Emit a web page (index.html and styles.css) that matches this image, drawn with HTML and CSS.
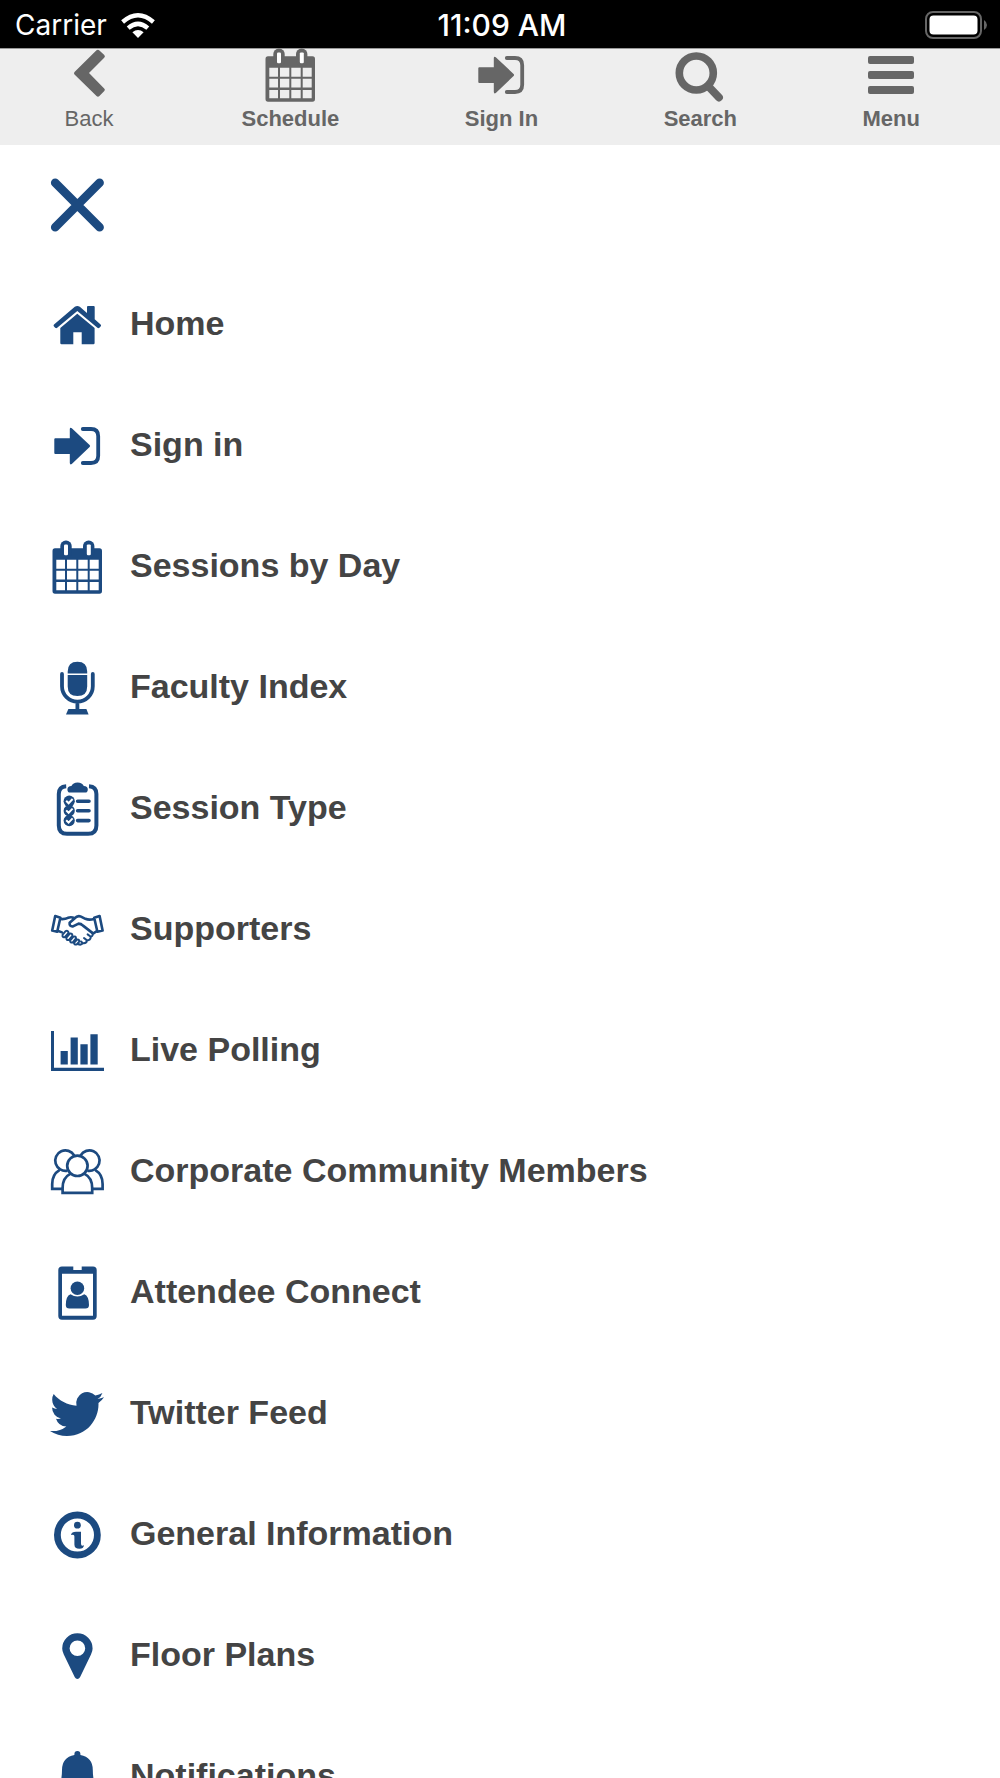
FILE: index.html
```
<!DOCTYPE html>
<html lang="en">
    <head>
        <title>Menu</title>
        <meta charset="utf-8">
        <meta name="viewport" content="width=device-width, initial-scale=1">
        <link rel="stylesheet" href="styles.css">
    </head>
    <body>
        <!-- icons used in both the nav bar and the menu -->
        <svg class="sprite" aria-hidden="true">
            <symbol id="icon-calendar" viewBox="0 0 54 54">
                <path fill-rule="evenodd" d="M5 8.3H49.5Q52 8.3 52 11V51Q52 53.7 49.5 53.7H5Q2.5 53.7 2.5 51V11Q2.5 8.3 5 8.3ZM6.3 19.7V28.7H15V19.7ZM17 19.7V28.7H26.3V19.7ZM28.3 19.7V28.7H37.7V19.7ZM39.7 19.7V28.7H48.7V19.7ZM6.3 30.7V39.5H15V30.7ZM17 30.7V39.5H26.3V30.7ZM28.3 30.7V39.5H37.7V30.7ZM39.7 30.7V39.5H48.7V30.7ZM6.3 42V50.2H15V42ZM17 42V50.2H26.3V42ZM28.3 42V50.2H37.7V42ZM39.7 42V50.2H48.7V42Z"/>
                <rect x="10.3" y="0.6" width="11.4" height="18" rx="5.5"/>
                <rect x="33" y="0.6" width="11.4" height="18" rx="5.5"/>
                <rect class="hole" x="14" y="4.4" width="4" height="10.8" rx="1.2"/>
                <rect class="hole" x="36.8" y="4.4" width="4" height="10.8" rx="1.2"/>
            </symbol>
            <symbol id="icon-sign-in" viewBox="0 0 54 54">
                <path d="M5.3 19.3H19.8V10Q20 7.8 21.8 9.2L39.6 26Q40.6 27 39.6 28L21.8 45Q20 46.2 19.8 44V35H5.3Q4.3 35 4.3 34V20.3Q4.3 19.3 5.3 19.3Z"/>
                <path class="line" stroke-width="3.8" stroke-linecap="round" d="M32.8 10H41Q48.2 10 48.2 17.2V36.8Q48.2 44 41 44H32.8"/>
            </symbol>
        </svg>

        <div class="status-bar">
            <div class="carrier">
                <span>Carrier</span>
                <svg class="wifi" viewBox="0 0 34 25">
                    <path d="M17 25L11.4 19.2Q17 14.6 22.6 19.2Z"/>
                    <path class="line" stroke-width="4.4" d="M7.2 15.2Q17 6.6 26.8 15.2M1.6 9Q17 -4.4 32.4 9"/>
                </svg>
            </div>
            <span class="time">11:09 AM</span>
            <svg class="battery" viewBox="0 0 64 28">
                <rect class="battery-case" x="1" y="1" width="55" height="26" rx="7"/>
                <rect x="4.5" y="4.5" width="48" height="19" rx="4"/>
                <path class="battery-tip" d="M59 9Q62 11 62 14Q62 17 59 19Z"/>
            </svg>
        </div>

        <nav class="nav-bar">
            <button type="button" class="nav-item back">
                <svg class="icon" viewBox="0 0 54 54"><path d="M12.5 24L34.5 2.3Q36 1 37.4 2.4L42.3 7Q43.6 8.4 42.2 9.8L27 25L42.2 40.4Q43.6 41.8 42.3 43L37.4 48Q36 49.4 34.5 48L12.5 26.4Q11.4 25.2 12.5 24Z"/></svg>
                <span>Back</span>
            </button>
            <a href="#schedule" class="nav-item">
                <svg class="icon"><use href="#icon-calendar"/></svg>
                <span>Schedule</span>
            </a>
            <a href="#sign-in" class="nav-item">
                <svg class="icon"><use href="#icon-sign-in"/></svg>
                <span>Sign In</span>
            </a>
            <a href="#search" class="nav-item">
                <svg class="icon" viewBox="0 0 54 54"><circle class="line" stroke-width="7.6" cx="23.3" cy="25" r="17"/><path class="line" stroke-width="7.8" stroke-linecap="round" d="M36.5 39.5L46 49.5"/></svg>
                <span>Search</span>
            </a>
            <button type="button" class="nav-item">
                <svg class="icon" viewBox="0 0 54 54"><rect x="4" y="8" width="46" height="8" rx="2"/><rect x="4" y="23" width="46" height="8" rx="2"/><rect x="4" y="38" width="46" height="8" rx="2"/></svg>
                <span>Menu</span>
            </button>
        </nav>

        <main class="menu">
            <button type="button" class="close" aria-label="Close menu">
                <svg class="icon" viewBox="0 0 54 54"><path class="line" stroke-width="8.6" stroke-linecap="round" d="M5.2 4.8L49.6 49.2M49.6 4.8L5.2 49.2"/></svg>
            </button>
            <ul class="menu-list">
                <li><a href="#home">
                    <svg class="icon" viewBox="0 0 54 54">
                        <path d="M4 26.6L24.8 8.8Q27.3 7 29.8 8.8L37 15V9Q37 8 38 8H43.7Q44.7 8 44.7 9V21.3L50.6 26.4Q51.6 27.4 50.6 28.4L49.4 29.8Q48.4 30.6 47.4 29.8L27.3 13L7.2 29.8Q6.2 30.6 5.2 29.8L4 28.6Q3 27.6 4 26.6Z"/>
                        <path d="M27.3 15.8L44.6 30V45Q44.6 46.2 43.4 46.2H31.7V34.3H23.3V46.2H11.5Q10.3 46.2 10.3 45V30Z"/>
                    </svg>
                    <span>Home</span>
                </a></li>
                <li><a href="#sign-in">
                    <svg class="icon"><use href="#icon-sign-in"/></svg>
                    <span>Sign in</span>
                </a></li>
                <li><a href="#sessions">
                    <svg class="icon"><use href="#icon-calendar"/></svg>
                    <span>Sessions by Day</span>
                </a></li>
                <li><a href="#faculty">
                    <svg class="icon" viewBox="0 0 54 54">
                        <path d="M17.7 12.4V10.5Q17.7 0.7 27.4 0.7Q37.2 0.7 37.2 10.5V12.4ZM17.7 14V25.4Q17.7 35 27.4 35Q37.2 35 37.2 25.4V14Z"/>
                        <path class="line" stroke-width="3.8" stroke-linecap="round" d="M12 13V25.3A15.4 15.4 0 0 0 42.8 25.3V13M27.4 41V49"/>
                        <path d="M18.4 48H36.4L38.6 53.6H16Z"/>
                    </svg>
                    <span>Faculty Index</span>
                </a></li>
                <li><a href="#session-type">
                    <svg class="icon" viewBox="0 0 54 54">
                        <path class="line" stroke-width="4" d="M16.2 4.2Q8.8 4.6 8.8 12V43.5Q8.8 51.8 17 51.8H38.2Q46.4 51.8 46.4 43.5V12Q46.4 4.6 39 4.2"/>
                        <path d="M20 10.6Q17.4 10.6 17.4 7.5Q17.4 4.3 21.4 4Q23 0.4 27.6 0.4Q32.2 0.4 33.8 4Q37.8 4.3 37.8 7.5Q37.8 10.6 35.2 10.6Z"/>
                        <circle cx="19.2" cy="19.2" r="5.6"/><circle cx="19.2" cy="28.8" r="5.6"/><circle cx="19.2" cy="38.6" r="5.6"/>
                        <path class="check" d="M16.2 18.8L18.6 21.2L22.6 17M16.2 28.4L18.6 30.8L22.6 26.6M16.2 38.2L18.6 40.6L22.6 36.4"/>
                        <path class="line" stroke-width="3.6" stroke-linecap="round" d="M27.6 19.2H39M27.6 28.8H39M27.6 38.6H39"/>
                    </svg>
                    <span>Session Type</span>
                </a></li>
                <li><a href="#supporters">
                    <svg class="icon" viewBox="0 0 54 54">
                        <g class="line" stroke-width="2.6" stroke-linejoin="round" stroke-linecap="round">
                            <path d="M5.2 13L10.4 14.8L7.2 28.8L2.2 27.6ZM49.6 13L52.6 27.6L47.4 28.8L44.2 14.8Z"/>
                            <path d="M10.6 16Q15 16.4 18 14.8Q21 13.4 24.8 15.2M44 16Q39 17.4 35.4 15.8L31 13.6Q27.4 12.2 24.8 15.2L19.6 19.8Q19.2 23.8 23 23.4L28.6 20.6Q31 20.6 33 22.6L42 29.6M47 28L43.4 30.4M7.6 27.8L12 29.4"/>
                        </g>
                        <g class="line" stroke-width="2" stroke-linejoin="round" stroke-linecap="round">
                            <path d="M12.6 31.6L15.6 28.2Q18.2 27 18.6 30L15 34Q12 35 12.6 31.6ZM16.4 34.6L19.6 30.8Q22.4 30 22.4 32.8L19 36.8Q16 37.6 16.4 34.6ZM20.2 37.4L23.4 33.6Q26 32.8 26 35.4L22.8 39.4Q19.8 40 20.2 37.4ZM24 39.8L26.8 36.8Q29.4 36 29.2 38.6L27 41.2Q24 42.4 24 39.8Z"/>
                            <path d="M28 41Q31 42.6 33 40.2L31 38.4M33 40.2Q36.6 40.6 37 37.4L34 35M37 37.4Q40.6 37.4 40.8 33.8L37.6 31.4M40.8 33.8Q43.8 33 42 29.6"/>
                        </g>
                    </svg>
                    <span>Supporters</span>
                </a></li>
                <li><a href="#polling">
                    <svg class="icon" viewBox="0 0 54 54">
                        <path d="M1 7H4V43.8H54V47H1ZM10.6 27H17.8V40.6H10.6ZM20.6 13.6H27.8V40.6H20.6ZM30.4 20.3H37.7V40.6H30.4ZM40.4 10.3H47.7V40.6H40.4Z"/>
                    </svg>
                    <span>Live Polling</span>
                </a></li>
                <li><a href="#members">
                    <svg class="icon" viewBox="0 0 54 54">
                        <g class="line" stroke-width="2.7">
                            <path d="M17.4 25.6A10.2 10.2 0 1 1 24.2 10.4M30.6 10.4A10.2 10.2 0 1 1 37.4 25.6M9.4 25.2Q2.2 29.6 2.2 39V43.8H12.6M45.4 25.2Q52.6 29.6 52.6 39V43.8H42.4"/>
                            <circle cx="27.4" cy="20.8" r="10.2"/>
                            <path d="M20.6 28.6Q12.6 32.6 12.6 43V47.8H42.2V43Q42.2 32.6 34.2 28.6"/>
                        </g>
                    </svg>
                    <span>Corporate Community Members</span>
                </a></li>
                <li><a href="#connect">
                    <svg class="icon" viewBox="0 0 54 54">
                        <path fill-rule="evenodd" d="M12 0.4H23.3V4H31.7V0.4H43Q46.7 0.4 46.7 4V50Q46.7 53.7 43 53.7H12Q8.3 53.7 8.3 50V4Q8.3 0.4 12 0.4ZM12 7.8V49.8H43V7.8Z"/>
                        <circle cx="27.4" cy="22.3" r="6.8"/>
                        <path d="M20.5 28.2Q27.4 32.6 34.3 28.2Q39 30 39 39Q39 42.6 35.4 42.6H19.4Q15.8 42.6 15.8 39Q15.8 30 20.5 28.2Z"/>
                    </svg>
                    <span>Attendee Connect</span>
                </a></li>
                <li><a href="#twitter">
                    <svg class="icon" viewBox="0 0 24 24">
                        <path d="M23.953 4.57a10 10 0 01-2.825.775 4.958 4.958 0 002.163-2.723c-.951.555-2.005.959-3.127 1.184a4.92 4.92 0 00-8.384 4.482C7.69 8.095 4.067 6.13 1.64 3.162a4.822 4.822 0 00-.666 2.475c0 1.71.87 3.213 2.188 4.096a4.904 4.904 0 01-2.228-.616v.06a4.923 4.923 0 003.946 4.827 4.996 4.996 0 01-2.212.085 4.936 4.936 0 004.604 3.417 9.867 9.867 0 01-6.102 2.105c-.39 0-.779-.023-1.17-.067a13.995 13.995 0 007.557 2.209c9.053 0 13.998-7.496 13.998-13.985 0-.21 0-.42-.015-.63A9.935 9.935 0 0024 4.59z"/>
                    </svg>
                    <span>Twitter Feed</span>
                </a></li>
                <li><a href="#information">
                    <svg class="icon" viewBox="0 0 54 54">
                        <circle class="line" stroke-width="6.8" cx="27.4" cy="27" r="20"/>
                        <circle cx="27.4" cy="17.2" r="3.4"/>
                        <path d="M21 27Q21.6 23.8 26 23.8H31V35.4Q31 37.8 32.4 37.8L34 37.2Q33.6 40.8 29.4 40.8Q24.4 40.8 24.4 36.4V28.4Q24.4 26.8 23 26.8Z"/>
                    </svg>
                    <span>General Information</span>
                </a></li>
                <li><a href="#floor-plans">
                    <svg class="icon" viewBox="0 0 54 54">
                        <path fill-rule="evenodd" d="M27.4 4.2A15.2 15.2 0 0 1 42.6 19.4Q42.6 22 41 25.4L30 48.2Q29 50 27.4 50Q25.8 50 24.8 48.2L13.8 25.4Q12.2 22 12.2 19.4A15.2 15.2 0 0 1 27.4 4.2ZM27.4 11.4A7.8 7.8 0 1 0 27.4 27A7.8 7.8 0 1 0 27.4 11.4Z"/>
                    </svg>
                    <span>Floor Plans</span>
                </a></li>
                <li><a href="#notifications">
                    <svg class="icon" viewBox="0 0 54 54">
                        <path d="M24.4 5V4Q24.4 1 27.4 1Q30.4 1 30.4 4V5Q42.8 7.4 42.8 20Q42.8 34 49 42H5.8Q12 34 12 20Q12 7.4 24.4 5ZM21 45H33.8Q33.4 52 27.4 52Q21.4 52 21 45Z"/>
                    </svg>
                    <span>Notifications</span>
                </a></li>
            </ul>
        </main>
    </body>
</html>
```
FILE: styles.css
```
* {
    box-sizing: border-box;
}

body {
    margin: 0;
    height: 100vh;
    display: flex;
    flex-direction: column;
    font-family: "Liberation Sans", Arial, Helvetica, sans-serif;
    background: #fff;
    color: #444;
}

button {
    border: none;
    background: none;
    padding: 0;
    color: inherit;
    font: inherit;
    cursor: pointer;
}

a {
    color: inherit;
    text-decoration: none;
}

svg {
    fill: currentColor;
    flex: none;
}

.sprite {
    position: absolute;
    width: 0;
    height: 0;
}

.icon {
    width: 54px;
    height: 54px;
}

.line {
    fill: none;
    stroke: currentColor;
}

.hole {
    fill: #fff;
}

.check {
    fill: none;
    stroke: #fff;
    stroke-width: 2;
}

/* status bar */

.status-bar {
    flex: none;
    height: 48px;
    padding: 0 11px 0 15px;
    display: grid;
    grid-template-columns: 1fr auto 1fr;
    align-items: center;
    font-family: Inter, "Liberation Sans", sans-serif;
    font-size: 28px;
    line-height: 50px;
    background: #000;
    color: #fff;
}

.carrier {
    display: flex;
    align-items: center;
    gap: 14px;
}

.time {
    font-size: 30px;
    font-weight: 500;
}

.wifi {
    width: 34px;
    height: 25px;
}

.battery {
    width: 64px;
    height: 28px;
    justify-self: end;
}

.battery-case {
    fill: none;
    stroke: #666;
    stroke-width: 2;
}

.battery-tip {
    fill: #666;
}

/* nav bar */

.nav-bar {
    flex: none;
    display: flex;
    justify-content: space-between;
    padding: 0 80px 13px 62px;
    background: #eee;
    color: #666;
    box-shadow: inset 0 1px #999;
}

.nav-item {
    display: flex;
    flex-direction: column;
    align-items: center;
    gap: 4px;
    font-size: 22px;
    line-height: 26px;
    font-weight: bold;
}

.nav-item.back {
    font-weight: normal;
}

/* menu */

.menu {
    flex: 1;
    min-height: 0;
    overflow-y: auto;
    scrollbar-width: none;
    padding: 0 50px;
}

.close {
    display: flex;
    align-items: center;
    height: 119px;
    color: #1c4a80;
}

.menu-list {
    list-style: none;
    margin: 0;
    padding: 0;
}

.menu-list a {
    display: flex;
    align-items: center;
    gap: 26px;
    height: 121px;
    font-size: 34px;
    line-height: 40px;
    font-weight: bold;
}

.menu-list .icon {
    color: #1c4a80;
}

.menu-list span {
    padding-bottom: 4px;
}
```
